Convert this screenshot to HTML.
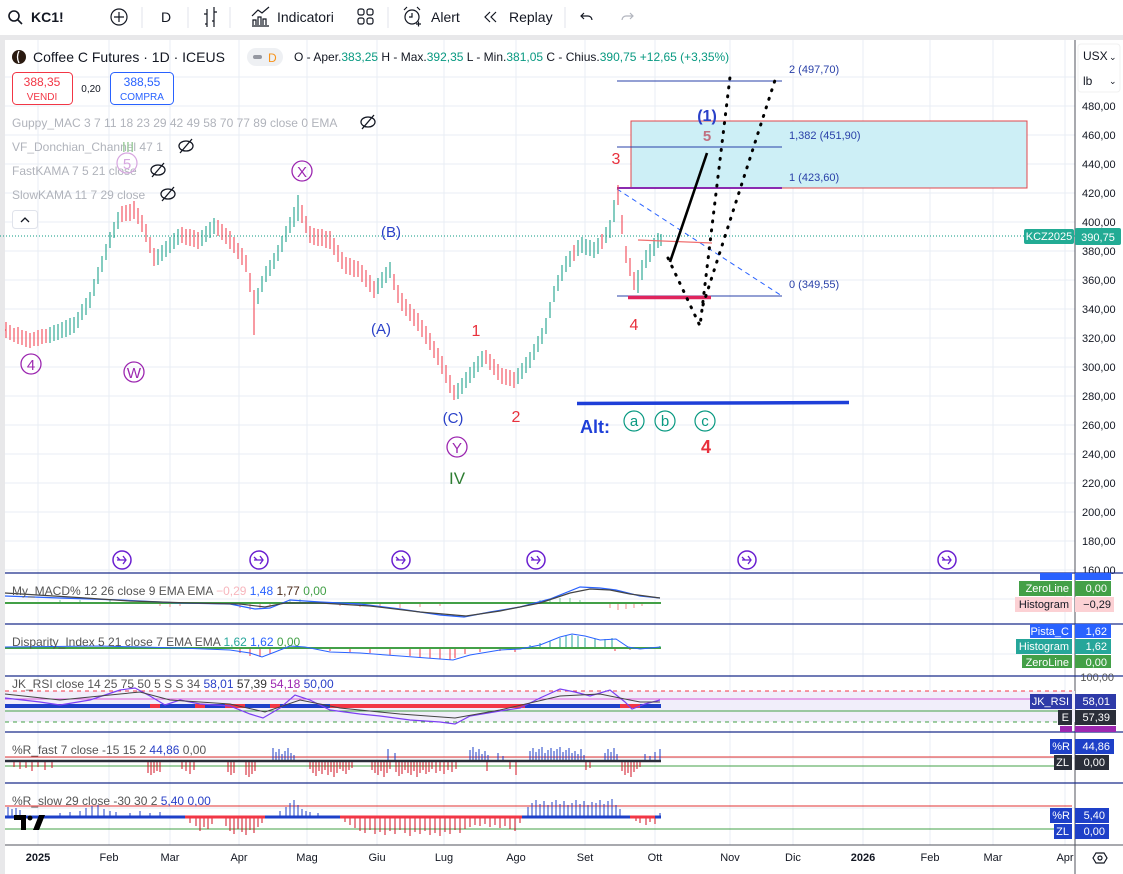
<!DOCTYPE html>
<html><head><meta charset="utf-8">
<style>
html,body{margin:0;padding:0;background:#fff;width:1123px;height:874px;overflow:hidden}
svg{display:block;font-family:"Liberation Sans",sans-serif}
</style></head>
<body>
<svg width="1123" height="874" viewBox="0 0 1123 874" xmlns="http://www.w3.org/2000/svg">
<rect width="1123" height="874" fill="#fff"/>
<rect x="0" y="35" width="1123" height="5" fill="#e8e8ea"/>
<rect x="0" y="35" width="5" height="839" fill="#e8e8ea"/>
<g font-size="14" fill="#131722">
<circle cx="14" cy="16" r="5" fill="none" stroke="#131722" stroke-width="1.6"/><line x1="18" y1="20" x2="22" y2="24" stroke="#131722" stroke-width="1.6"/>
<text x="31" y="22" font-weight="bold">KC1!</text>
<circle cx="119" cy="17" r="8" fill="none" stroke="#131722" stroke-width="1.2"/><path d="M119 12v10M114 17h10" stroke="#131722" stroke-width="1.2"/>
<line x1="142" y1="7" x2="142" y2="28" stroke="#e0e3eb"/>
<text x="161" y="22">D</text>
<line x1="188" y1="7" x2="188" y2="28" stroke="#e0e3eb"/>
<path d="M207 9v18M204 14h3M205 24h2M214 7v20M214 12h3M212 21h2" stroke="#131722" stroke-width="1.2" fill="none"/>
<line x1="230" y1="7" x2="230" y2="28" stroke="#e0e3eb"/>
<path d="M252 26h17M253 25v-5h3v5M258 25v-8h3v8M263 25v-6h3v6M252 16l6-6 4 3 7-6" stroke="#131722" stroke-width="1.2" fill="none"/>
<text x="277" y="22">Indicatori</text>
<rect x="358" y="9" width="6" height="6" rx="2" fill="none" stroke="#131722" stroke-width="1.2"/><rect x="367" y="9" width="6" height="6" rx="2" fill="none" stroke="#131722" stroke-width="1.2"/><rect x="358" y="18" width="6" height="6" rx="2" fill="none" stroke="#131722" stroke-width="1.2"/><rect x="367" y="18" width="6" height="6" rx="2" fill="none" stroke="#131722" stroke-width="1.2"/>
<line x1="388" y1="7" x2="388" y2="28" stroke="#e0e3eb"/>
<circle cx="412" cy="17" r="7" fill="none" stroke="#131722" stroke-width="1.2"/><path d="M412 13v4h-3M404 10l3-3M420 10l-3-3M416 24h5M418.5 21.5v5" stroke="#131722" stroke-width="1.2" fill="none"/>
<text x="431" y="22">Alert</text>
<path d="M490 12l-5 5 5 5M496 12l-5 5 5 5" stroke="#131722" stroke-width="1.2" fill="none"/>
<text x="509" y="22">Replay</text>
<line x1="565" y1="7" x2="565" y2="28" stroke="#e0e3eb"/>
<path d="M584 13l-3 3 3 3M581 16h7a4 4 0 0 1 4 4" stroke="#131722" stroke-width="1.2" fill="none"/>
<path d="M630 13l3 3-3 3M633 16h-7a4 4 0 0 0-4 4" stroke="#b2b5be" stroke-width="1.2" fill="none"/>
</g>
<!-- grid -->
<g stroke="#e9edf4" stroke-width="1">
<path d="M38 40V845M109 40V845M170 40V845M239 40V845M307 40V845M377 40V845M444 40V845M516 40V845M585 40V845M655 40V845M730 40V845M793 40V845M863 40V845M930 40V845M993 40V845M1065 40V845"/>
<path d="M5 77H1075M5 106H1075M5 135H1075M5 164H1075M5 193H1075M5 222H1075M5 251H1075M5 280H1075M5 309H1075M5 338H1075M5 367H1075M5 396H1075M5 425H1075M5 454H1075M5 483H1075M5 512H1075M5 541H1075M5 570H1075"/>
<path d="M5 599H1075M5 654H1075M5 700H1075M5 758H1075M5 808H1075"/>
</g>
<line x1="1075" y1="40" x2="1075" y2="874" stroke="#50535e" stroke-width="1"/>
<g font-size="11" fill="#131722">
<text x="1082" y="110">480,00</text><text x="1082" y="139">460,00</text><text x="1082" y="168">440,00</text><text x="1082" y="197">420,00</text><text x="1082" y="226">400,00</text><text x="1082" y="255">380,00</text><text x="1082" y="284">360,00</text><text x="1082" y="313">340,00</text><text x="1082" y="342">320,00</text><text x="1082" y="371">300,00</text><text x="1082" y="400">280,00</text><text x="1082" y="429">260,00</text><text x="1082" y="458">240,00</text><text x="1082" y="487">220,00</text><text x="1082" y="516">200,00</text><text x="1082" y="545">180,00</text><text x="1082" y="574">160,00</text>
</g>
<rect x="1078" y="44" width="42" height="48" rx="3" fill="#fff" stroke="#f0f0f0"/>
<text x="1083" y="60" font-size="12" fill="#131722">USX</text><text x="1109" y="60" font-size="9" fill="#131722">⌄</text>
<text x="1083" y="85" font-size="12" fill="#131722">lb</text><text x="1109" y="84" font-size="9" fill="#131722">⌄</text>
<!-- fib / box -->
<rect x="631" y="121" width="396" height="67" fill="#cdeff6" stroke="#e0474c" stroke-width="1"/>
<g stroke="#2940a8" stroke-width="1">
<line x1="617" y1="81" x2="782" y2="81"/><line x1="617" y1="147" x2="782" y2="147"/><line x1="617" y1="296" x2="782" y2="296"/></g>
<line x1="617" y1="188" x2="782" y2="188" stroke="#8b2bb0" stroke-width="2"/>
<line x1="617" y1="189" x2="782" y2="296" stroke="#2962ff" stroke-width="1" stroke-dasharray="5,4"/>
<g font-size="11" fill="#2940a8"><text x="789" y="73">2 (497,70)</text><text x="789" y="139">1,382 (451,90)</text><text x="789" y="181">1 (423,60)</text><text x="789" y="288">0 (349,55)</text></g>
<line x1="0" y1="236" x2="1075" y2="236" stroke="#089981" stroke-width="1" stroke-dasharray="1,2"/>
<!-- price bars -->
<path fill="none" stroke="#f23645" stroke-width="1" d="
M6 322V338M5 330H6M10 325V340M14 328V342M18 327V344M22 330V345M26 331V347M30 333V348M34 332V346M38 330V346M42 329V344M46 329V343
M122 206V222M126 205V221M130 204V221M134 201V219M138 208V224M142 215V232M146 224V242M150 237V253M154 248V266
M182 227V243M186 229V245M190 229V246M194 230V247M198 232V249
M218 220V236M222 224V240M226 228V244M230 231V249M234 237V253M238 243V259M242 248V265M246 255V272M250 273V292M254 290V335
M302 205V223M306 216V233M310 226V243M314 228V245M318 229V246M322 229V246M326 231V248M330 231V249M334 238V255M338 245V262M342 252V269M346 257V274M350 258V275M354 260V277M358 261V277M362 265V282M366 270V287M370 275V292M374 281V298
M394 274V290M398 285V303M402 293V311M406 299V316M410 304V321M414 309V326M418 313V331M422 320V337M426 326V344M430 333V350M434 341V358M438 348V365M442 356V374M446 365V383M450 375V393M454 385V400
M486 350V364M490 354V370M494 359V375M498 364V380M502 368V384M506 369V385M510 370V386M514 372V388
M618 185V205M622 215V234M626 246V263M630 258V276M634 272V290M574 245V261M602 234V249
"/>
<path fill="none" stroke="#089981" stroke-width="1" d="
M50 327V343M54 325V341M58 324V340M62 322V338M66 320V337M70 318V335M74 317V333M78 312V328M82 304V320M86 298V315M90 292V308M94 279V296M98 267V284M102 256V272M106 244V260M110 232V248M114 222V238M118 212V229
M158 249V265M162 245V261M166 241V257M170 237V253M174 233V249M178 229V245
M202 230V246M206 226V242M210 222V238M214 218V234
M258 288V304M262 276V292M266 266V282M270 260V276M274 253V269M278 245V261M282 236V252M286 226V242M290 217V233M294 207V227M298 195V221
M378 278V294M382 272V288M386 267V283M390 262V278
M458 383V399M462 378V394M466 372V388M470 367V383M474 362V378M478 356V372M482 351V367
M518 368V384M522 363V379M526 357V373M530 352V368M534 344V360M538 336V352M542 328V344M546 318V334M550 302V318M554 286V302M558 275V291M562 265V281M566 256V272M570 251V267M578 240V256M582 237V253M586 239V255M590 240V256M594 242V258M598 238V254M606 227V243M610 220V238M614 200V222
M638 270V293M642 260V280M646 250V268M650 244V262M654 238V256M658 233V248M661 234V246
"/>
<line x1="628" y1="297.5" x2="711" y2="297.5" stroke="#e0245c" stroke-width="3.5"/>
<line x1="638" y1="240" x2="712" y2="243" stroke="#f07070" stroke-width="1.3"/>
<line x1="670" y1="262" x2="707" y2="153" stroke="#000" stroke-width="2.6"/>
<polyline points="668,258 700,326 730,77" fill="none" stroke="#000" stroke-width="3" stroke-dasharray="1,8" stroke-linecap="round"/>
<polyline points="703,305 776,77" fill="none" stroke="#000" stroke-width="3" stroke-dasharray="1,8" stroke-linecap="round"/>
<line x1="577" y1="403.5" x2="849" y2="402.5" stroke="#1e3fd8" stroke-width="3.5"/>
<!-- legends -->
<g font-size="14">
<circle cx="19" cy="57" r="7" fill="#2a1a10"/><path d="M19 51q-3 6 0 12" stroke="#fff" stroke-width="1.3" fill="none"/>
<text x="33" y="62" fill="#131722">Coffee C Futures · 1D · ICEUS</text>
<rect x="247" y="48" width="36" height="18" rx="9" fill="#eef0f3"/><rect x="253" y="55" width="9" height="4" rx="2" fill="#9598a1"/><text x="268" y="62" font-size="12" fill="#f7931a">D</text>
</g>
<g font-size="12" fill="#131722"><text x="294" y="61">O - Aper.<tspan fill="#089981">383,25</tspan> H - Max.<tspan fill="#089981">392,35</tspan> L - Min.<tspan fill="#089981">381,05</tspan> C - Chius.<tspan fill="#089981">390,75 +12,65 (+3,35%)</tspan></text></g>
<rect x="12.5" y="72.5" width="60" height="32" rx="4" fill="#fff" stroke="#f23645"/>
<text x="42" y="86" font-size="12" fill="#f23645" text-anchor="middle">388,35</text><text x="42" y="100" font-size="10" fill="#f23645" text-anchor="middle">VENDI</text>
<text x="91" y="92" font-size="10" fill="#131722" text-anchor="middle">0,20</text>
<rect x="110.5" y="72.5" width="63" height="32" rx="4" fill="#fff" stroke="#2962ff"/>
<text x="142" y="86" font-size="12" fill="#2962ff" text-anchor="middle">388,55</text><text x="142" y="100" font-size="10" fill="#2962ff" text-anchor="middle">COMPRA</text>
<g font-size="12" fill="#b0b3bb">
<text x="12" y="127">Guppy_MAC 3 7 11 18 23 29 42 49 58 70 77 89 close 0 EMA</text>
<text x="12" y="151">VF_Donchian_Channel 47 1</text>
<text x="12" y="175">FastKAMA 7 5 21 close</text>
<text x="12" y="199">SlowKAMA 11 7 29 close</text></g>
<g fill="none" stroke="#131722" stroke-width="1.3"><ellipse cx="368" cy="122" rx="7" ry="5"/><line x1="362" y1="129" x2="374" y2="115"/>
<ellipse cx="186" cy="146" rx="7" ry="5"/><line x1="180" y1="153" x2="192" y2="139"/>
<ellipse cx="158" cy="170" rx="7" ry="5"/><line x1="152" y1="177" x2="164" y2="163"/>
<ellipse cx="168" cy="194" rx="7" ry="5"/><line x1="162" y1="201" x2="174" y2="187"/></g>
<rect x="12.5" y="210.5" width="25" height="18" rx="3" fill="#fff" stroke="#e0e3eb"/><path d="M21 222l4-4 4 4" stroke="#131722" stroke-width="1.3" fill="none"/>
<!-- wave labels -->
<g font-size="15" text-anchor="middle">
<g fill="none" stroke="#9c27b0" stroke-width="1.3"><circle cx="31" cy="364" r="10"/><circle cx="134" cy="372" r="10"/><circle cx="302" cy="171" r="10"/><circle cx="457" cy="447" r="10"/></g>
<circle cx="127" cy="163" r="10" fill="none" stroke="#d7a6e0" stroke-width="1.2"/><text x="127" y="169" fill="#d7a6e0">5</text>
<text x="128" y="152" fill="#9ccc9c">III</text>
<g fill="#9c27b0"><text x="31" y="370">4</text><text x="134" y="378">W</text><text x="302" y="177">X</text><text x="457" y="453">Y</text></g>
<text x="457" y="484" fill="#2e7d32" font-size="17">IV</text>
<g fill="#2940c8"><text x="381" y="334">(A)</text><text x="391" y="237">(B)</text><text x="453" y="423">(C)</text><text x="707" y="121" font-weight="bold" font-size="16">(1)</text></g>
<text x="707" y="141" fill="#c07080" font-weight="bold">5</text>
<g fill="#e8303c" font-size="16"><text x="476" y="336">1</text><text x="516" y="422">2</text><text x="616" y="164">3</text><text x="634" y="330">4</text><text x="706" y="453" font-weight="bold" font-size="18">4</text></g>
<text x="595" y="433" fill="#1e3fd8" font-weight="bold" font-size="18">Alt:</text>
<g fill="none" stroke="#089981" stroke-width="1.2"><circle cx="634" cy="421" r="10"/><circle cx="665" cy="421" r="10"/><circle cx="705" cy="421" r="10"/></g>
<g fill="#089981"><text x="634" y="426">a</text><text x="665" y="426">b</text><text x="705" y="426">c</text></g>
</g>
<!-- events -->
<g fill="#fff" stroke="#6a1fd0" stroke-width="1.5">
<circle cx="122" cy="560" r="9"/><circle cx="259" cy="560" r="9"/><circle cx="401" cy="560" r="9"/><circle cx="536" cy="560" r="9"/><circle cx="747" cy="560" r="9"/><circle cx="947" cy="560" r="9"/></g>
<g fill="none" stroke="#6a1fd0" stroke-width="1.3">
<path d="M117 560h9M123 556l3 4-3 4M117 557l3 3"/><path d="M254 560h9M260 556l3 4-3 4M254 557l3 3"/><path d="M396 560h9M402 556l3 4-3 4M396 557l3 3"/><path d="M531 560h9M537 556l3 4-3 4M531 557l3 3"/><path d="M742 560h9M748 556l3 4-3 4M742 557l3 3"/><path d="M942 560h9M948 556l3 4-3 4M942 557l3 3"/></g>
<rect x="1024" y="229" width="50" height="15" rx="2" fill="#22ab94"/><text x="1049" y="240" font-size="11" fill="#fff" text-anchor="middle">KCZ2025</text>
<rect x="1075" y="228" width="46" height="17" rx="2" fill="#22ab94"/><text x="1098" y="241" font-size="11" fill="#fff" text-anchor="middle">390,75</text>
<!-- MACD panel -->
<path d="M160 603v3M170 603v4M180 603v3M240 603v5M250 603v7M260 603v6M270 603v4M340 603v3M360 603v4M380 603v4M400 603v5M420 603v4M440 603v3M610 603v5M618 603v7M626 603v6M634 603v5M642 603v3" stroke="#f28b8b" fill="none"/>
<path d="M60 603v-3M80 603v-3M110 603v-4M290 603v-3M300 603v-4M540 603v-3M550 603v-4M560 603v-5M570 603v-5M580 603v-3" stroke="#7bc89a" fill="none"/>
<line x1="5" y1="603" x2="661" y2="603" stroke="#43a047" stroke-width="2"/>
<polyline points="5,596 60,598 120,600 180,603 230,604 255,609 270,608 290,600 320,602 360,604 400,609 440,615 464,617 490,612 520,607 550,599 580,587 600,588 616,590 640,596 660,598" fill="none" stroke="#2962ff" stroke-width="1.2"/>
<polyline points="5,593 70,597 130,601 190,603 240,604 265,607 285,603 320,603 370,606 420,612 466,616 500,611 540,603 570,593 590,589 610,590 630,594 660,598" fill="none" stroke="#444" stroke-width="1.2"/>
<!-- Disparity panel -->
<path d="M240 648v5M250 648v8M260 648v9M270 648v6M330 648v3M350 648v4M370 648v5M390 648v7M410 648v8M420 648v9M430 648v10M440 648v11M450 648v12M455 648v10M465 648v6M480 648v4M500 648v3M515 648v4M615 648v3M630 648v2" stroke="#f23645" fill="none"/>
<path d="M530 648v-3M540 648v-5M550 648v-7M560 648v-10M566 648v-12M572 648v-13M578 648v-12M585 648v-10M595 648v-9M605 648v-9M612 648v-10M660 648v-2" stroke="#26a69a" fill="none"/>
<line x1="5" y1="648" x2="661" y2="648" stroke="#43a047" stroke-width="2"/>
<polyline points="5,647 100,646 180,648 230,650 250,653 262,657 275,652 290,646 305,647 330,652 360,653 400,656 440,659 453,660 470,655 500,650 520,649 540,645 560,637 572,634 585,636 600,640 616,639 628,647 640,649 660,647" fill="none" stroke="#2962ff" stroke-width="1"/>
<!-- RSI panel -->
<rect x="5" y="691" width="1070" height="31" fill="#f1eefa"/>
<line x1="5" x2="1072" y1="691" y2="691" stroke="#f23645" stroke-dasharray="4,4"/>
<line x1="5" x2="1072" y1="699" y2="699" stroke="#d65ad6"/>
<line x1="5" x2="1072" y1="711" y2="711" stroke="#43a047"/>
<line x1="5" x2="1072" y1="722" y2="722" stroke="#43a047" stroke-dasharray="4,4"/>
<line x1="5" x2="661" y1="706" y2="706" stroke="#1e40c8" stroke-width="4"/>
<path d="M150 706H160M195 706H205M225 706H245M270 706H280M330 706H525M620 706H640" stroke="#f23645" stroke-width="4"/>
<polyline points="5,698 40,702 60,705 90,700 120,690 135,688 150,696 165,705 180,700 200,704 230,706 250,714 263,718 280,708 295,695 310,700 330,710 360,714 380,716 410,720 440,722 455,724 470,716 500,711 520,708 540,698 560,689 575,692 590,696 610,690 625,702 632,709 645,704 660,700" fill="none" stroke="#7b3ff2" stroke-width="1.2"/>
<polyline points="5,694 60,700 120,694 140,692 170,700 230,704 265,712 300,700 340,708 400,714 455,718 500,710 560,696 600,694 640,702 660,702" fill="none" stroke="#444" stroke-width="1"/>
<!-- %R fast -->
<line x1="5" x2="1072" y1="757" y2="757" stroke="#e03030"/>
<line x1="5" x2="1072" y1="766" y2="766" stroke="#43a047"/>
<path fill="none" stroke="#d01020" d="M14 761v6M20 761v8M26 761v7M32 761v10M38 761v6M45 761v9M52 761v7M148 761v12M151 761v14M154 761v12M157 761v10M160 761v11M182 761v8M186 761v10M190 761v13M194 761v9M228 761v11M231 761v14M234 761v12M246 761v14M249 761v16M252 761v13M255 761v10M310 761v8M313 761v12M316 761v15M319 761v10M322 761v13M325 761v9M328 761v14M331 761v11M334 761v16M337 761v12M340 761v8M343 761v10M346 761v13M349 761v9M352 761v7M372 761v9M375 761v12M378 761v14M381 761v10M384 761v16M387 761v12M390 761v8M396 761v11M399 761v15M402 761v13M405 761v9M408 761v12M411 761v14M414 761v10M417 761v16M420 761v12M423 761v9M426 761v13M429 761v11M432 761v8M436 761v12M440 761v10M444 761v13M448 761v9M452 761v11M456 761v8M487 761v10M510 761v8M516 761v14M586 761v9M590 761v7M622 761v10M625 761v14M628 761v12M631 761v16M634 761v11M637 761v8M640 761v6"/>
<path fill="none" stroke="#1e40c8" d="M273 761v-13M276 761v-9M279 761v-12M282 761v-7M285 761v-10M288 761v-13M291 761v-8M294 761v-6M388 761v-12M395 761v-8M470 761v-11M473 761v-14M476 761v-9M479 761v-12M482 761v-7M485 761v-10M488 761v-6M498 761v-8M503 761v-5M530 761v-10M533 761v-13M536 761v-9M539 761v-12M542 761v-14M545 761v-8M548 761v-11M551 761v-13M554 761v-10M557 761v-12M560 761v-14M563 761v-9M566 761v-11M569 761v-13M572 761v-8M575 761v-10M578 761v-7M581 761v-12M584 761v-6M605 761v-8M608 761v-12M611 761v-9M614 761v-13M617 761v-7M645 761v-7M650 761v-5M655 761v-9M660 761v-12"/>
<line x1="5" x2="661" y1="761" y2="761" stroke="#2a2e39" stroke-width="2.5"/>
<!-- %R slow -->
<line x1="5" x2="1072" y1="806" y2="806" stroke="#e03030"/>
<line x1="5" x2="1072" y1="829" y2="829" stroke="#43a047"/>
<path fill="none" stroke="#1e40c8" d="M8 817v-10M12 817v-8M16 817v-9M20 817v-7M60 817v-4M70 817v-5M80 817v-6M86 817v-9M92 817v-11M98 817v-12M104 817v-8M110 817v-6M116 817v-5M130 817v-4M140 817v-6M150 817v-4M160 817v-5M280 817v-6M286 817v-10M290 817v-14M294 817v-17M298 817v-12M302 817v-8M306 817v-6M310 817v-5M318 817v-4M528 817v-10M532 817v-14M536 817v-17M540 817v-13M544 817v-16M548 817v-12M552 817v-15M556 817v-17M560 817v-13M564 817v-16M568 817v-12M572 817v-14M576 817v-17M580 817v-13M584 817v-16M588 817v-12M592 817v-15M596 817v-14M600 817v-17M604 817v-13M608 817v-16M612 817v-18M616 817v-12M620 817v-8M660 817v-4"/>
<path fill="none" stroke="#d01020" d="M190 817v6M196 817v9M200 817v14M204 817v10M208 817v12M212 817v7M226 817v9M230 817v14M234 817v17M238 817v12M242 817v15M246 817v18M250 817v13M254 817v16M258 817v10M262 817v6M345 817v5M350 817v8M355 817v11M360 817v14M365 817v16M370 817v13M375 817v17M380 817v15M385 817v18M390 817v14M395 817v17M400 817v13M405 817v16M410 817v19M415 817v15M420 817v17M425 817v14M430 817v18M435 817v16M440 817v19M445 817v15M450 817v17M455 817v13M460 817v16M465 817v12M470 817v10M475 817v8M480 817v9M485 817v7M490 817v10M495 817v8M500 817v11M505 817v9M510 817v12M515 817v14M520 817v6M636 817v4M640 817v6M646 817v8M650 817v5M655 817v7"/>
<path d="M5 817H185M265 817H340M522 817H630M655 817H661" stroke="#1e40c8" stroke-width="3"/>
<path d="M185 817H265M340 817H522M630 817H655" stroke="#f23645" stroke-width="3"/>
<!-- separators -->
<g stroke="#1a2c8a" stroke-width="1.3"><line x1="5" y1="573" x2="1123" y2="573"/><line x1="5" y1="624" x2="1123" y2="624"/><line x1="5" y1="676" x2="1123" y2="676"/><line x1="5" y1="732" x2="1123" y2="732"/><line x1="5" y1="783" x2="1123" y2="783"/></g>
<line x1="5" y1="845" x2="1123" y2="845" stroke="#50535e" stroke-width="1"/>
<g font-size="12">
<text x="12" y="595" fill="#555">My_MACD% 12 26 close 9 EMA EMA <tspan fill="#f7b6bd">−0,29</tspan> <tspan fill="#2962ff">1,48</tspan> <tspan fill="#4a2a1a">1,77</tspan> <tspan fill="#43a047">0,00</tspan></text>
<text x="12" y="646" fill="#555">Disparity_Index 5 21 close 7 EMA EMA <tspan fill="#26a69a">1,62</tspan> <tspan fill="#2962ff">1,62</tspan> <tspan fill="#43a047">0,00</tspan></text>
<text x="12" y="688" fill="#555">JK_RSI close 14 25 75 50 5 S S 34 <tspan fill="#2940c8">58,01</tspan> <tspan fill="#333">57,39</tspan> <tspan fill="#9c27b0">54,18</tspan> <tspan fill="#2940c8">50,00</tspan></text>
<text x="12" y="754" fill="#555">%R_fast 7 close -15 15 2 <tspan fill="#2940c8">44,86</tspan> <tspan fill="#555">0,00</tspan></text>
<text x="12" y="805" fill="#555">%R_slow 29 close -30 30 2 <tspan fill="#2940c8">5,40</tspan> <tspan fill="#2940c8">0,00</tspan></text>
</g>
<g font-size="11" fill="#fff" text-anchor="end">
<rect x="1040" y="573" width="32" height="7" fill="#2962ff"/><rect x="1075" y="573" width="36" height="7" fill="#2962ff"/>
<rect x="1019" y="581" width="53" height="15" fill="#43a047"/><text x="1069" y="592">ZeroLine</text>
<rect x="1075" y="581" width="36" height="15" fill="#43a047"/><text x="1107" y="592">0,00</text>
<rect x="1015" y="597" width="57" height="15" fill="#fcd1d4"/><text x="1069" y="608" fill="#131722">Histogram</text>
<rect x="1075" y="597" width="39" height="15" fill="#fcd1d4"/><text x="1111" y="608" fill="#131722">−0,29</text>
<rect x="1030" y="624" width="42" height="14" fill="#2962ff"/><text x="1069" y="635">Pista_C</text>
<rect x="1075" y="624" width="36" height="14" fill="#2962ff"/><text x="1107" y="635">1,62</text>
<rect x="1016" y="639" width="56" height="15" fill="#26a69a"/><text x="1069" y="650">Histogram</text>
<rect x="1075" y="639" width="36" height="15" fill="#26a69a"/><text x="1107" y="650">1,62</text>
<rect x="1022" y="655" width="50" height="13" fill="#43a047"/><text x="1069" y="666">ZeroLine</text>
<rect x="1075" y="655" width="36" height="13" fill="#43a047"/><text x="1107" y="666">0,00</text>
<text x="1114" y="681" fill="#555">100,00</text>
<rect x="1030" y="694" width="42" height="15" fill="#2e3aa8"/><text x="1069" y="705">JK_RSI</text>
<rect x="1075" y="694" width="41" height="15" fill="#2e3aa8"/><text x="1110" y="705">58,01</text>
<rect x="1058" y="710" width="14" height="15" fill="#2a2e39"/><text x="1069" y="721">E</text>
<rect x="1075" y="710" width="41" height="15" fill="#2a2e39"/><text x="1110" y="721">57,39</text>
<rect x="1060" y="726" width="12" height="6" fill="#9c27b0"/><rect x="1075" y="726" width="41" height="6" fill="#9c27b0"/>
<rect x="1050" y="739" width="22" height="15" fill="#1e40c8"/><text x="1070" y="750">%R</text>
<rect x="1075" y="739" width="39" height="15" fill="#1e40c8"/><text x="1110" y="750">44,86</text>
<rect x="1054" y="755" width="18" height="15" fill="#2a2e39"/><text x="1069" y="766">ZL</text>
<rect x="1075" y="755" width="34" height="15" fill="#2a2e39"/><text x="1105" y="766">0,00</text>
<rect x="1050" y="808" width="22" height="15" fill="#1e40c8"/><text x="1070" y="819">%R</text>
<rect x="1075" y="808" width="34" height="15" fill="#1e40c8"/><text x="1105" y="819">5,40</text>
<rect x="1054" y="824" width="18" height="15" fill="#1e40c8"/><text x="1069" y="835">ZL</text>
<rect x="1075" y="824" width="34" height="15" fill="#1e40c8"/><text x="1105" y="835">0,00</text>
</g>
<!-- time axis -->
<g font-size="11" fill="#131722" text-anchor="middle">
<text x="38" y="861" font-weight="bold">2025</text><text x="109" y="861">Feb</text><text x="170" y="861">Mar</text><text x="239" y="861">Apr</text><text x="307" y="861">Mag</text><text x="377" y="861">Giu</text><text x="444" y="861">Lug</text><text x="516" y="861">Ago</text><text x="585" y="861">Set</text><text x="655" y="861">Ott</text><text x="730" y="861">Nov</text><text x="793" y="861">Dic</text><text x="863" y="861" font-weight="bold">2026</text><text x="930" y="861">Feb</text><text x="993" y="861">Mar</text><text x="1065" y="861">Apr</text>
</g>
<path d="M1093 858l3-5h8l3 5-3 5h-8z" fill="none" stroke="#131722" stroke-width="1.2"/><circle cx="1100" cy="858" r="2" fill="none" stroke="#131722" stroke-width="1.2"/>
<g fill="#000"><path d="M14 815h12v15h-5v-10h-7z"/><circle cx="30" cy="818" r="2.5"/><path d="M33 830l6-15h6l-6 15z"/></g>
</svg>
</body></html>
